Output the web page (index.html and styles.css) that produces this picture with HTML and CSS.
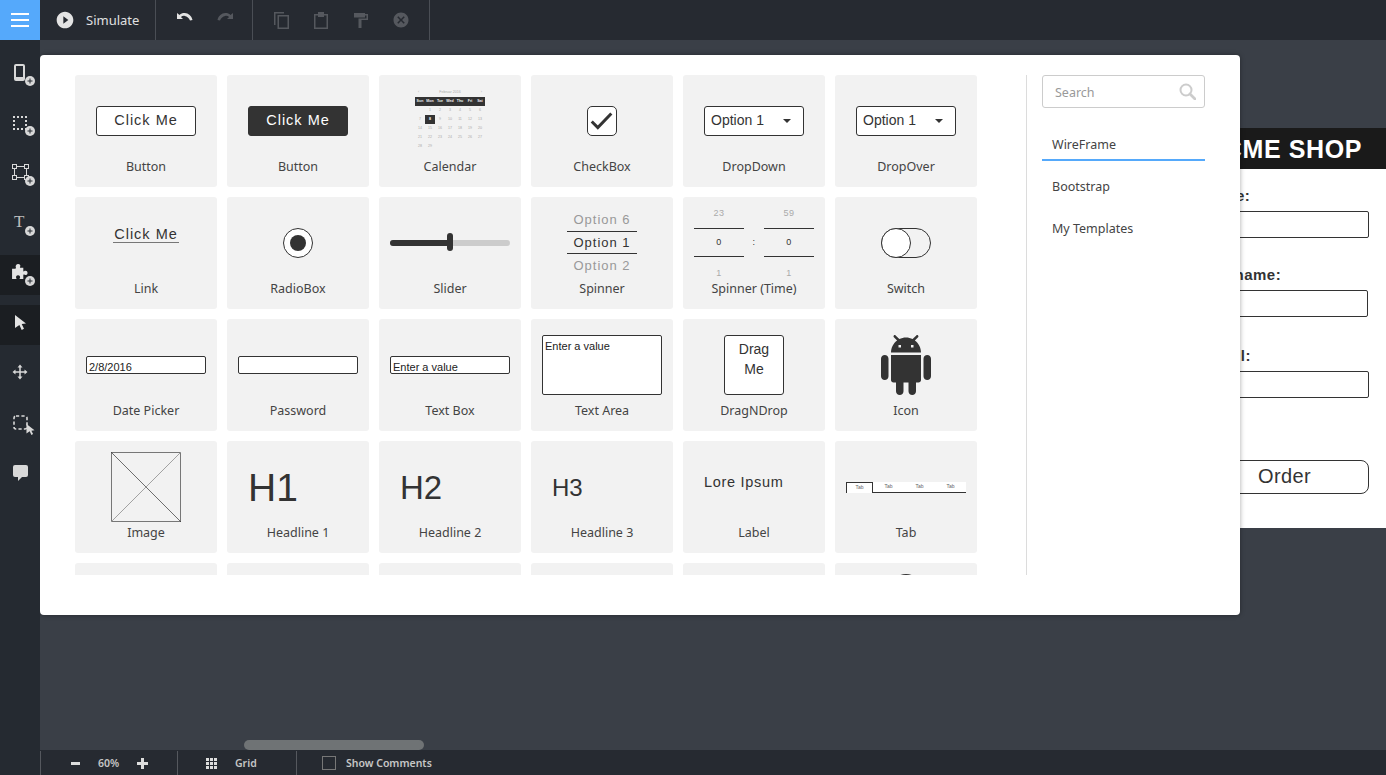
FILE: index.html
```html
<!DOCTYPE html>
<html lang="en">
<head>
<meta charset="utf-8">
<title>Wireframe editor</title>
<link rel="stylesheet" href="styles.css">
</head>
<body>
<svg class="defs" width="0" height="0" aria-hidden="true">
  <symbol id="i-plus" viewBox="0 0 12 12"><circle cx="6" cy="6" r="6" fill="#d8d8d8"/><path d="M3 5.400h2.400V3h1.200v2.400H9v1.200H6.600V9H5.400V6.600H3z" fill="#252a31"/></symbol>
  <symbol id="i-play" viewBox="0 0 24 24"><path d="M12 2C6.480 2 2 6.480 2 12s4.480 10 10 10 10-4.480 10-10S17.520 2 12 2zm-2 14.500v-9l6 4.500-6 4.500z"/></symbol>
  <symbol id="i-undo" viewBox="0 0 16 11"><path d="M0 0v6h6L3.900 4C5 3 6.300 2.700 7.800 2.900 10 3.200 12 4.800 13 7.500l2.500-.6C14.600 3 11.300.3 7.800.1 5.800 0 4 .6 2.500 2z"/></symbol>
  <symbol id="i-copy" viewBox="0 0 15 17"><path d="M0 0h10v1.500H1.500V13H0z"/><path d="M3.500 3H15v14H3.500zM5 4.500v11h8.500v-11z" fill-rule="evenodd"/></symbol>
  <symbol id="i-paste" viewBox="0 0 14 17"><path d="M0 2h4V0h6v2h4v15H0zM1.500 3.500v12h11v-12H10V5H4V3.500z" fill-rule="evenodd"/></symbol>
  <symbol id="i-roller" viewBox="0 0 14 15"><path d="M0 0h11v1h3v6H7.500v8H4.500V5.500H12.500V2.500H11v2H0z"/></symbol>
  <symbol id="i-cancel" viewBox="0 0 24 24"><path d="M12 2C6.470 2 2 6.470 2 12s4.470 10 10 10 10-4.470 10-10S17.530 2 12 2zm5 13.590L15.590 17 12 13.410 8.410 17 7 15.590 10.590 12 7 8.410 8.410 7 12 10.590 15.590 7 17 8.410 13.410 12 17 15.590z"/></symbol>
  <symbol id="i-puzzle" viewBox="0 0 18 16"><path d="M6.500 0c2 0 3 1.500 2 3.200-.3.500 0 .8.500.8h3v3.500c0 .5.400.7.800.3 1.700-1.200 3.700-.3 3.700 1.700s-2 3-3.700 1.800c-.4-.4-.8-.2-.8.300V16H8.500c-.5 0-.7-.4-.3-.8 1-1.500 0-3.200-1.800-3.200s-2.800 1.700-1.800 3.200c.3.400.1.800-.4.800H0V5h3.700c.5 0 .7-.5.400-1C3.200 2 4.500 0 6.500 0z"/></symbol>
  <symbol id="i-move" viewBox="0 0 16 16"><path d="M8 2.500v11M2.500 8h11" fill="none" stroke="#d8d8d8" stroke-width="1.500"/><path d="M8 .5L10.500 3.500h-5zM8 15.500L5.500 12.500h5zM.5 8L3.500 5.500v5zM15.500 8L12.500 10.500v-5z"/></symbol>
  <symbol id="i-cursor" viewBox="0 0 11 15"><path d="M0 0l11 8.500-4.300.6 2.300 4.700-2.300 1.200-2.300-5L0 13z"/></symbol>
  <symbol id="i-android" viewBox="0 0 24 24"><path d="M6 18c0 .55.45 1 1 1h1v3.500c0 .83.67 1.500 1.500 1.500s1.500-.67 1.500-1.500V19h2v3.500c0 .83.67 1.500 1.500 1.500s1.500-.67 1.500-1.500V19h1c.55 0 1-.45 1-1V8H6v10zM3.500 8C2.670 8 2 8.670 2 9.500v7c0 .83.67 1.500 1.500 1.500S5 17.330 5 16.500v-7C5 8.670 4.330 8 3.500 8zm17 0c-.83 0-1.500.67-1.500 1.500v7c0 .83.67 1.500 1.500 1.500s1.500-.67 1.500-1.500v-7c0-.83-.67-1.500-1.500-1.500zm-4.970-5.840l1.300-1.300c.2-.2.2-.51 0-.71-.2-.2-.51-.2-.71 0l-1.480 1.480C13.850 1.230 12.950 1 12 1c-.96 0-1.860.23-2.660.63L7.850.15c-.2-.2-.51-.2-.71 0-.2.2-.2.51 0 .71l1.310 1.310C6.970 3.260 6 5.010 6 7h12c0-1.990-.97-3.750-2.470-4.840zM10 5H9V4h1v1zm5 0h-1V4h1v1z"/></symbol>
</svg>

<div class="app">
  <button class="menu-btn" aria-label="Menu"><span></span><span></span><span></span></button>

  <header class="topbar">
    <div class="tb-group tb-sim">
      <svg class="ic-play"><use href="#i-play"/></svg>
      <span class="sim-label">Simulate</span>
    </div>
    <div class="tb-group tb-hist">
      <svg class="ic-undo"><use href="#i-undo"/></svg>
      <svg class="ic-undo ic-flip"><use href="#i-undo"/></svg>
    </div>
    <div class="tb-group tb-edit">
      <svg class="ic-copy"><use href="#i-copy"/></svg>
      <svg class="ic-paste"><use href="#i-paste"/></svg>
      <svg class="ic-roller"><use href="#i-roller"/></svg>
      <svg class="ic-cancel"><use href="#i-cancel"/></svg>
    </div>
  </header>

  <nav class="rail">
    <div class="rail-item">
      <span class="phone"></span>
      <svg class="rail-plus"><use href="#i-plus"/></svg>
    </div>
    <div class="rail-item">
      <span class="dotted"></span>
      <svg class="rail-plus"><use href="#i-plus"/></svg>
    </div>
    <div class="rail-item">
      <span class="shape"><i></i><i></i><i></i><i></i></span>
      <svg class="rail-plus"><use href="#i-plus"/></svg>
    </div>
    <div class="rail-item">
      <span class="glyph-t">T</span>
      <svg class="rail-plus"><use href="#i-plus"/></svg>
    </div>
    <div class="rail-item rail-active">
      <svg class="ic-puzzle"><use href="#i-puzzle"/></svg>
      <svg class="rail-plus"><use href="#i-plus"/></svg>
    </div>
    <div class="rail-item rail-active">
      <svg class="ic-cursor"><use href="#i-cursor"/></svg>
    </div>
    <div class="rail-item">
      <svg class="ic-move"><use href="#i-move"/></svg>
    </div>
    <div class="rail-item">
      <svg class="ic-dashed" viewBox="0 0 15 15"><rect x="1" y="1" width="13" height="13" rx="2" fill="none" stroke="#d8d8d8" stroke-width="1.600" stroke-dasharray="3.200 2.200"/></svg>
      <svg class="ic-cursor-sm"><use href="#i-cursor"/></svg>
    </div>
    <div class="rail-item">
      <span class="comment"></span>
    </div>
  </nav>

  <main class="canvas">
    <section class="artboard">
      <div class="ab-head">ACME SHOP</div>
      <div class="ab-field ab-f1"><label class="lb-name">Name:</label><div class="ab-input"></div></div>
      <div class="ab-field ab-f2"><label class="lb-sur">Surname:</label><div class="ab-input ab-input-short"></div></div>
      <div class="ab-field ab-f3"><label class="lb-mail">Email:</label><div class="ab-input"></div></div>
      <div class="ab-order">Order</div>
    </section>

    <section class="modal">
      <div class="palette">
        <div class="grid">
          <div class="cell"><div class="pv"><div class="w-btn">Click Me</div></div><div class="lb">Button</div></div>
          <div class="cell"><div class="pv"><div class="w-btn w-btn-dark">Click Me</div></div><div class="lb">Button</div></div>
          <div class="cell"><div class="pv"><div class="cal">
            <div class="cal-title"><span>‹</span><span>Februar 2016</span><span>›</span></div>
            <div class="cal-head"><span>Sun</span><span>Mon</span><span>Tue</span><span>Wed</span><span>Thu</span><span>Fri</span><span>Sat</span></div>
            <div class="cal-days">
              <span></span><span>1</span><span>2</span><span>3</span><span>4</span><span>5</span><span>6</span>
              <span>7</span><span class="cal-on">8</span><span>9</span><span>10</span><span>11</span><span>12</span><span>13</span>
              <span>14</span><span>15</span><span>16</span><span>17</span><span>18</span><span>19</span><span>20</span>
              <span>21</span><span>22</span><span>23</span><span>24</span><span>25</span><span>26</span><span>27</span>
              <span>28</span><span>29</span>
            </div>
          </div></div><div class="lb">Calendar</div></div>
          <div class="cell"><div class="pv"><div class="w-check"><svg viewBox="0 0 30 30"><path d="M4 15.500l6.500 6.500L25 7" fill="none" stroke="#333" stroke-width="3.200"/></svg></div></div><div class="lb">CheckBox</div></div>
          <div class="cell"><div class="pv"><div class="w-drop"><span>Option 1</span><i class="caret"></i></div></div><div class="lb">DropDown</div></div>
          <div class="cell"><div class="pv"><div class="w-drop"><span>Option 1</span><i class="caret"></i></div></div><div class="lb">DropOver</div></div>

          <div class="cell"><div class="pv"><div class="w-link">Click Me</div></div><div class="lb">Link</div></div>
          <div class="cell"><div class="pv"><div class="w-radio"><i></i></div></div><div class="lb">RadioBox</div></div>
          <div class="cell"><div class="pv"><div class="w-slider"><i class="sl-fill"></i><i class="sl-knob"></i></div></div><div class="lb">Slider</div></div>
          <div class="cell"><div class="pv"><div class="w-spin">
            <div class="sp-row sp-dim">Option 6</div>
            <div class="sp-row sp-cur">Option 1</div>
            <div class="sp-row sp-dim">Option 2</div>
          </div></div><div class="lb">Spinner</div></div>
          <div class="cell"><div class="pv"><div class="w-time">
            <div class="t-col"><div class="t-a">23</div><div class="t-b">0</div><div class="t-c">1</div></div>
            <div class="t-sep">:</div>
            <div class="t-col"><div class="t-a">59</div><div class="t-b">0</div><div class="t-c">1</div></div>
          </div></div><div class="lb">Spinner (Time)</div></div>
          <div class="cell"><div class="pv"><div class="w-switch"><i></i></div></div><div class="lb">Switch</div></div>

          <div class="cell"><div class="pv"><div class="w-input">2/8/2016</div></div><div class="lb">Date Picker</div></div>
          <div class="cell"><div class="pv"><div class="w-input"></div></div><div class="lb">Password</div></div>
          <div class="cell"><div class="pv"><div class="w-input">Enter a value</div></div><div class="lb">Text Box</div></div>
          <div class="cell"><div class="pv"><div class="w-area">Enter a value</div></div><div class="lb">Text Area</div></div>
          <div class="cell"><div class="pv"><div class="w-drag">Drag Me</div></div><div class="lb">DragNDrop</div></div>
          <div class="cell"><div class="pv"><svg class="w-android"><use href="#i-android"/></svg></div><div class="lb">Icon</div></div>

          <div class="cell"><div class="pv"><svg class="w-image" viewBox="0 0 70 70"><rect x=".5" y=".5" width="69" height="69" fill="none" stroke="#777"/><path d="M0 0l70 70" stroke="#333" stroke-width=".7"/><path d="M70 0L0 70" stroke="#999" stroke-width=".9"/></svg></div><div class="lb">Image</div></div>
          <div class="cell"><div class="pv pv-left"><div class="w-h1">H1</div></div><div class="lb">Headline 1</div></div>
          <div class="cell"><div class="pv pv-left"><div class="w-h2">H2</div></div><div class="lb">Headline 2</div></div>
          <div class="cell"><div class="pv pv-left"><div class="w-h3">H3</div></div><div class="lb">Headline 3</div></div>
          <div class="cell"><div class="pv pv-left"><div class="w-label">Lore Ipsum</div></div><div class="lb">Label</div></div>
          <div class="cell"><div class="pv"><div class="w-tabs">
            <span class="tab tab-on">Tab</span><span class="tab">Tab</span><span class="tab">Tab</span><span class="tab">Tab</span>
          </div></div><div class="lb">Tab</div></div>

          <div class="cell"></div>
          <div class="cell"></div>
          <div class="cell"></div>
          <div class="cell"></div>
          <div class="cell"></div>
          <div class="cell cell-dome"><i class="dome"></i></div>
        </div>
      </div>

      <aside class="side">
        <div class="search">
          <span>Search</span>
          <svg class="ic-search" viewBox="0 0 17 17"><circle cx="7" cy="7" r="5.500" fill="none" stroke="#ccc" stroke-width="2"/><path d="M11 11l5 5" stroke="#ccc" stroke-width="2.800" stroke-linecap="round"/></svg>
        </div>
        <ul class="libs">
          <li class="lib lib-on">WireFrame</li>
          <li class="lib">Bootstrap</li>
          <li class="lib">My Templates</li>
        </ul>
      </aside>
    </section>

    <div class="hscroll"></div>
  </main>

  <footer class="bottombar">
    <div class="bb-group bb-zoom">
      <i class="bb-minus"></i>
      <span class="bb-text">60%</span>
      <i class="bb-plus"></i>
    </div>
    <div class="bb-group bb-grid">
      <span class="dots"><i></i><i></i><i></i><i></i><i></i><i></i><i></i><i></i><i></i></span>
      <span class="bb-text">Grid</span>
    </div>
    <div class="bb-group bb-comments">
      <i class="bb-check"></i>
      <span class="bb-text">Show Comments</span>
    </div>
  </footer>
</div>
</body>
</html>
```

FILE: styles.css
```css
* { box-sizing: border-box; }
html, body { margin: 0; height: 100%; overflow: hidden; }
body { font-family: "Noto Sans", "Open Sans", sans-serif; background: #3a3f47; }
.defs { position: absolute; }
i { display: block; font-style: normal; }

.app {
  display: grid;
  grid-template-columns: 40px 1fr;
  grid-template-rows: 40px 1fr 25px;
  width: 1386px;
  height: 775px;
}

/* top */
.menu-btn {
  background: #55a9fb;
  border: 0;
  padding: 0;
  display: flex;
  flex-direction: column;
  align-items: center;
  justify-content: center;
  gap: 4px;
}
.menu-btn span { display: block; width: 18px; height: 2px; background: #fff; }
.topbar { display: flex; background: #262a31; }
.tb-group { display: flex; align-items: center; border-right: 1px solid #4a4e55; height: 40px; }
.tb-sim { width: 116px; padding-left: 16px; }
.ic-play { width: 20px; height: 20px; fill: #e3e3e3; margin-left: -1px; }
.sim-label { color: #e0e0e0; font-size: 13px; margin-left: 11px; }
.tb-hist { width: 97px; padding-left: 21px; gap: 24px; }
.ic-undo { width: 16px; height: 11px; fill: #e3e3e3; margin-top: -4px; }
.ic-flip { transform: scaleX(-1); fill: #55585e; }
.tb-edit { width: 177px; padding-left: 21px; }
.ic-copy { width: 15px; height: 17px; fill: #55585e; }
.ic-paste { width: 14px; height: 17px; fill: #55585e; margin-left: 25px; }
.ic-roller { width: 14px; height: 15px; fill: #55585e; margin-left: 26px; }
.ic-cancel { width: 18px; height: 18px; fill: #55585e; margin-left: 24px; }

/* rail */
.rail { grid-row: 2 / 4; background: #252a31; padding-top: 15px; }
.rail-item { position: relative; height: 40px; margin-bottom: 10px; }
.rail-active { background: #1b1e22; }
.rail-plus { position: absolute; left: 25px; top: 21px; width: 10px; height: 10px; }
.phone { position: absolute; left: 14px; top: 9px; width: 11px; height: 17px; border: 2px solid #d8d8d8; border-bottom-width: 4px; border-radius: 2px; }
.dotted { position: absolute; left: 13px; top: 11px; width: 14px; height: 14px; border: 2px dotted #d8d8d8; }
.shape { position: absolute; left: 14px; top: 11px; width: 13px; height: 12px; border: 1px solid #d8d8d8; }
.shape i { position: absolute; width: 5px; height: 5px; border: 1px solid #d8d8d8; background: #252a31; }
.shape i:nth-child(1) { left: -3px; top: -3px; }
.shape i:nth-child(2) { right: -3px; top: -3px; }
.shape i:nth-child(3) { left: -3px; bottom: -3px; }
.shape i:nth-child(4) { right: -3px; bottom: -3px; }
.glyph-t { position: absolute; left: 14px; top: 5px; font: 17px/24px "Liberation Serif", serif; color: #bdbdbd; }
.ic-puzzle { position: absolute; left: 12px; top: 9px; width: 17px; height: 15px; fill: #e3e3e3; }
.ic-cursor { position: absolute; left: 15px; top: 10px; width: 11px; height: 15px; fill: #e3e3e3; }
.ic-move { position: absolute; left: 12px; top: 9px; width: 16px; height: 16px; fill: #d8d8d8; }
.ic-dashed { position: absolute; left: 13px; top: 10px; width: 15px; height: 15px; }
.ic-cursor-sm { position: absolute; left: 26px; top: 19px; width: 9px; height: 11px; fill: #d8d8d8; }
.comment { position: absolute; left: 13px; top: 10px; width: 15px; height: 12px; background: #d8d8d8; border-radius: 2px; }
.comment::after { content: ""; position: absolute; left: 5px; top: 12px; border: 2px solid transparent; border-top-color: #d8d8d8; border-left-color: #d8d8d8; }

/* canvas */
.canvas { position: relative; overflow: hidden; background: #3a3f47; }
.artboard { position: absolute; left: 1120px; top: 88px; width: 226px; height: 400px; background: #fff; font-family: "Liberation Sans", Arial, sans-serif; }
.ab-head { height: 41px; background: #1a1a1a; color: #fff; font-size: 25px; font-weight: 700; line-height: 43px; text-align: right; padding-right: 24px; letter-spacing: .6px; }
.ab-field { padding-left: 40px; }
.ab-field label { display: block; font-weight: 700; font-size: 15px; line-height: 18px; letter-spacing: .5px; color: #333; }
.ab-input { height: 27px; width: 169px; border: 1px solid #333; border-radius: 2px; background: #fff; margin-top: 6px; }
.ab-input-short { width: 168px; }
.ab-f1 { margin-top: 18px; }
.ab-f2 { margin-top: 28px; }
.ab-f3 { margin-top: 30px; }
.lb-name { margin-left: 2px; }
.lb-sur { margin-left: 8px; }
.lb-mail { margin-left: 3px; }
.ab-order { margin: 62px 0 0 40px; width: 169px; height: 34px; border: 1px solid #333; border-radius: 8px; color: #333; text-align: center; font-size: 20px; line-height: 31px; letter-spacing: .4px; }

.modal {
  position: absolute;
  left: 0;
  top: 15px;
  width: 1200px;
  height: 560px;
  background: #fff;
  border-radius: 4px;
  padding: 20px 35px 40px;
  display: flex;
  justify-content: space-between;
  box-shadow: 0 0 5px rgba(0,0,0,.35);
}
.palette { width: 902px; height: 500px; overflow: hidden; }
.grid { display: grid; grid-template-columns: repeat(6, 142px); grid-auto-rows: 112px; gap: 10px; }
.cell { background: #f2f2f2; border-radius: 3px; position: relative; }
.pv { height: 80px; padding-top: 11px; display: flex; align-items: center; justify-content: center; }
.pv-left { justify-content: flex-start; padding-left: 21px; }
.lb { height: 24px; line-height: 24px; text-align: center; font-size: 12.5px; color: #444; }

.w-btn, .w-link, .w-spin, .w-label { font-family: "Liberation Sans", Arial, sans-serif; letter-spacing: 1px; color: #333; }
.w-btn { width: 100px; height: 30px; background: #fff; border: 1px solid #333; border-radius: 3px; text-align: center; font-size: 14.5px; line-height: 27px; }
.w-btn-dark { background: #333; color: #fff; }
.cal { width: 70px; font-family: "Liberation Sans", Arial, sans-serif; font-size: 3.6px; color: #aaa; margin-bottom: 2px; }
.cal-title { display: flex; justify-content: space-between; height: 9px; line-height: 9px; padding: 0 3px; }
.cal-head { display: grid; grid-template-columns: repeat(7, 10px); height: 9px; line-height: 9px; background: #333; color: #eee; font-weight: 700; text-align: center; }
.cal-days { display: grid; grid-template-columns: repeat(7, 10px); grid-auto-rows: 9px; line-height: 9px; text-align: center; }
.cal-on { background: #333; color: #fff; font-weight: 700; }
.w-check { width: 30px; height: 30px; background: #fff; border: 1px solid #333; border-radius: 5px; }
.w-check svg { display: block; width: 28px; height: 28px; }
.w-drop { width: 100px; height: 30px; background: #fff; border: 1px solid #333; border-radius: 3px; display: flex; align-items: center; justify-content: space-between; padding: 0 12px 2px 6px; font: 14px "Liberation Sans", Arial, sans-serif; color: #333; }
.caret { border: 4px solid transparent; border-top-color: #333; border-bottom-width: 0; margin-top: 2px; }
.w-link { font-size: 14.5px; height: 17px; line-height: 16px; border-bottom: 1px solid #777; padding: 0 1px; margin-bottom: 16px; }
.w-radio { width: 30px; height: 30px; border: 1px solid #333; border-radius: 50%; background: #fff; display: flex; align-items: center; justify-content: center; }
.w-radio i { width: 16px; height: 16px; border-radius: 50%; background: #333; }
.w-slider { position: relative; width: 120px; height: 6px; background: #ccc; border-radius: 3px; }
.sl-fill { width: 60px; height: 6px; background: #333; border-radius: 3px 0 0 3px; }
.sl-knob { position: absolute; left: 57px; top: -7px; width: 6px; height: 18px; background: #333; border-radius: 3px; }
.w-spin { width: 70px; font-size: 13px; text-align: center; }
.sp-row { height: 23px; line-height: 23px; }
.sp-dim { color: #999; }
.sp-cur { border-top: 1px solid #333; border-bottom: 1px solid #333; line-height: 21px; }
.w-time { display: flex; font-family: "Liberation Sans", Arial, sans-serif; font-size: 9px; letter-spacing: .5px; color: #333; text-align: center; }
.t-col { width: 50px; }
.t-a, .t-c { height: 30px; line-height: 30px; color: #aaa; }
.t-c { line-height: 32px; }
.t-b { height: 29px; line-height: 27px; border-top: 1px solid #333; border-bottom: 1px solid #333; }
.t-sep { width: 20px; line-height: 88px; }
.w-switch { width: 50px; height: 30px; border: 1px solid #333; border-radius: 15px; position: relative; }
.w-switch i { position: absolute; left: -1px; top: -1px; width: 30px; height: 30px; border: 1px solid #333; border-radius: 50%; background: #fff; }
.w-input { width: 120px; height: 18px; background: #fff; border: 1px solid #333; border-radius: 2px; padding: 0 2px; font: 11px/20px "Liberation Sans", Arial, sans-serif; color: #222; }
.w-area { width: 120px; height: 60px; background: #fff; border: 1px solid #333; border-radius: 2px; padding: 3px 2px; font: 11px/14px "Liberation Sans", Arial, sans-serif; color: #222; }
.w-drag { width: 60px; height: 60px; background: #fff; border: 1px solid #333; border-radius: 3px; padding: 3px 8px; text-align: center; font: 14px/20px "Liberation Sans", Arial, sans-serif; color: #333; }
.w-android { width: 60px; height: 60px; fill: #333; }
.w-image { width: 70px; height: 70px; display: block; }
.w-h1, .w-h2, .w-h3 { font-family: "Liberation Sans", Arial, sans-serif; color: #333; padding-top: 2px; }
.w-h1 { font-size: 39px; }
.w-h2 { font-size: 33px; }
.w-h3 { font-size: 24px; }
.w-label { font-size: 14.5px; padding-bottom: 10px; letter-spacing: .7px; }
.w-tabs { width: 120px; height: 11px; background: #fff; border-bottom: 1px solid #333; display: flex; font: 5px/9px "Liberation Sans", Arial, sans-serif; color: #666; text-align: center; margin-top: 1px; }
.tab { width: 31px; }
.tab-on { width: 27px; height: 11px; border: 1px solid #333; border-bottom: 0; background: #fff; }
.cell-dome { overflow: hidden; }
.dome { position: absolute; left: 56px; top: 11px; width: 30px; height: 30px; border-radius: 50%; background: #333; }

.side { width: 179px; border-left: 1px solid #dcdcdc; padding-left: 15px; }
.search { height: 33px; border: 1px solid #ccc; border-radius: 3px; display: flex; align-items: center; justify-content: space-between; padding: 2px 8px 0 12px; font-size: 12.5px; color: #999; }
.ic-search { width: 17px; height: 17px; margin-top: -2px; }
.libs { list-style: none; margin: 15px 0 0; padding: 0; }
.lib { height: 38px; margin-bottom: 4px; line-height: 44px; padding-left: 10px; font-size: 12.5px; color: #444; }
.lib-on { border-bottom: 2px solid #55a9fb; }

.hscroll { position: absolute; left: 204px; bottom: 0; width: 180px; height: 10px; border-radius: 5px; background: #6f7375; }

/* bottom */
.bottombar { display: flex; background: #262a31; color: #c6c6c6; }
.bb-group { display: flex; align-items: center; height: 24px; border-left: 1px solid #55585e; margin-top: 1px; }
.bb-text { font-size: 10.5px; font-weight: 600; }
.bb-zoom { width: 137px; padding-left: 30px; }
.bb-minus { width: 9px; height: 3px; background: #ddd; }
.bb-zoom .bb-text { margin-left: 18px; }
.bb-plus { width: 11px; height: 11px; margin-left: 18px; background: linear-gradient(#ddd, #ddd) center/100% 3px no-repeat, linear-gradient(#ddd, #ddd) center/3px 100% no-repeat; }
.bb-grid { width: 119px; padding-left: 28px; }
.dots { display: grid; grid-template-columns: repeat(3, 3px); grid-auto-rows: 3px; gap: 1px; }
.dots i { background: #ddd; }
.bb-grid .bb-text { margin-left: 18px; }
.bb-comments { padding-left: 25px; }
.bb-check { width: 14px; height: 14px; border: 1px solid #777; }
.bb-comments .bb-text { margin-left: 10px; }
```
